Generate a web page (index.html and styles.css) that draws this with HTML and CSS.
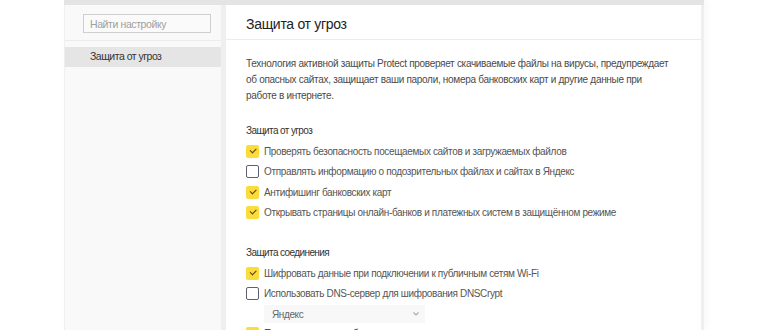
FILE: index.html
```
<!DOCTYPE html>
<html lang="ru">
<head>
  <meta charset="UTF-8" />
  <title>Защита от угроз</title>
  <link rel="stylesheet" href="styles.css">
</head>
<body>
  <div class="window">
    <div class="topbar"></div>
    <div class="frame">
      <aside class="sidebar">
        <div class="search-box">
          <input class="search" type="text" placeholder="Найти настройку">
        </div>
        <div class="nav-item active">Защита от угроз</div>
      </aside>

      <main class="panel">
        <div class="panel-head">Защита от угроз</div>
        <div class="panel-body">
          <p class="intro">Технология активной защиты Protect проверяет скачиваемые файлы на вирусы, предупреждает об опасных сайтах, защищает ваши пароли, номера банковских карт и другие данные при<br>работе в интернете.</p>

          <div class="group">
            <div class="group-title">Защита от угроз</div>
            <label class="option"><span class="box checked"></span>Проверять безопасность посещаемых сайтов и загружаемых файлов</label>
            <label class="option"><span class="box"></span>Отправлять информацию о подозрительных файлах и сайтах в Яндекс</label>
            <label class="option"><span class="box checked"></span>Антифишинг банковских карт</label>
            <label class="option"><span class="box checked"></span>Открывать страницы онлайн-банков и платежных систем в защищённом режиме</label>
          </div>

          <div class="group">
            <div class="group-title">Защита соединения</div>
            <label class="option"><span class="box checked"></span>Шифровать данные при подключении к публичным сетям Wi-Fi</label>
            <label class="option"><span class="box"></span>Использовать DNS-сервер для шифрования DNSCrypt</label>
            <div class="select">
              <span>Яндекс</span>
              <svg width="8" height="6" viewBox="0 0 8 6"><path d="M1.5 1.5 L4 4 L6.5 1.5" fill="none" stroke="#aaa" stroke-width="1.1"/></svg>
            </div>
            <label class="option"><span class="box checked"></span>Предупреждать о небезопасных соединениях</label>
          </div>
        </div>
      </main>
    </div>
  </div>
</body>
</html>
```

FILE: styles.css
```
* {
  box-sizing: border-box;
}

body {
  margin: 0;
  background: #fff;
  font-family: 'Liberation Sans', Arial, sans-serif;
  color: #333;
}

.window {
  margin-left: 64px;
  width: 640px;
  height: 330px;
  overflow: hidden;
  background: #eeeeee;
  display: flex;
  flex-direction: column;
  box-shadow: 3px 0 8px rgba(0, 0, 0, 0.03);
}

.topbar {
  height: 5px;
  flex-shrink: 0;
  background: #e4e4e4;
}

.frame {
  flex: 1;
  min-height: 0;
  display: flex;
  gap: 5px;
  padding: 0 3px 0 1px;
  background: #efefef;
}

.sidebar {
  width: 156px;
  flex-shrink: 0;
  background: #f9f9f9;
}

.search-box {
  padding: 9px 10px 7px 18px;
  border-bottom: 1px solid #ececec;
}

.search {
  display: block;
  width: 100%;
  height: 19px;
  border: 1px solid #cfcfcf;
  background: #fafafa;
  padding: 0 6px;
  font-family: inherit;
  font-size: 10.5px;
  letter-spacing: -0.4px;
  color: #333;
  outline: none;
}

.search::placeholder {
  color: #a0a0a0;
}

.nav-item {
  margin-top: 6px;
  height: 20px;
  padding: 3px 0 0 25px;
  font-size: 10.5px;
  letter-spacing: -0.5px;
  color: #333;
}

.nav-item.active {
  background: #e5e5e5;
}

.panel {
  flex: 1;
  min-width: 0;
  overflow: hidden;
  background: #fff;
}

.panel-head {
  height: 35px;
  padding: 11px 20px 0;
  font-size: 14px;
  letter-spacing: -0.3px;
  color: #222;
  border-bottom: 1px solid #ececec;
}

.panel-body {
  padding: 16px 20px 0;
}

.intro {
  margin: 0 0 21px;
  font-size: 10px;
  letter-spacing: -0.3px;
  line-height: 16px;
  color: #4a4a4a;
  width: 429px;
}

.group {
  margin-bottom: 24px;
}

.group-title {
  font-size: 10px;
  letter-spacing: -0.6px;
  color: #333;
  margin-bottom: 5px;
}

.option {
  display: flex;
  align-items: center;
  gap: 5px;
  height: 20.5px;
  font-size: 10px;
  letter-spacing: -0.35px;
  color: #555;
}

.box {
  width: 13px;
  height: 13px;
  border: 1.5px solid #5c6072;
  border-radius: 2px;
  flex-shrink: 0;
  background: #fff;
  position: relative;
}

.box.checked {
  border: none;
  background: #fbdc3a;
}

.box.checked::after {
  content: '';
  position: absolute;
  left: 3.5px;
  top: 3px;
  width: 5px;
  height: 2.5px;
  border-left: 1.6px solid #5a3d10;
  border-bottom: 1.6px solid #5a3d10;
  transform: rotate(-45deg);
}

.select {
  margin: 1px 0 0 18px;
  width: 161px;
  height: 18px;
  display: flex;
  align-items: center;
  justify-content: space-between;
  padding: 0 5px 0 8px;
  background: #f8f8f8;
  font-size: 10px;
  letter-spacing: -0.4px;
  color: #666;
}
```
